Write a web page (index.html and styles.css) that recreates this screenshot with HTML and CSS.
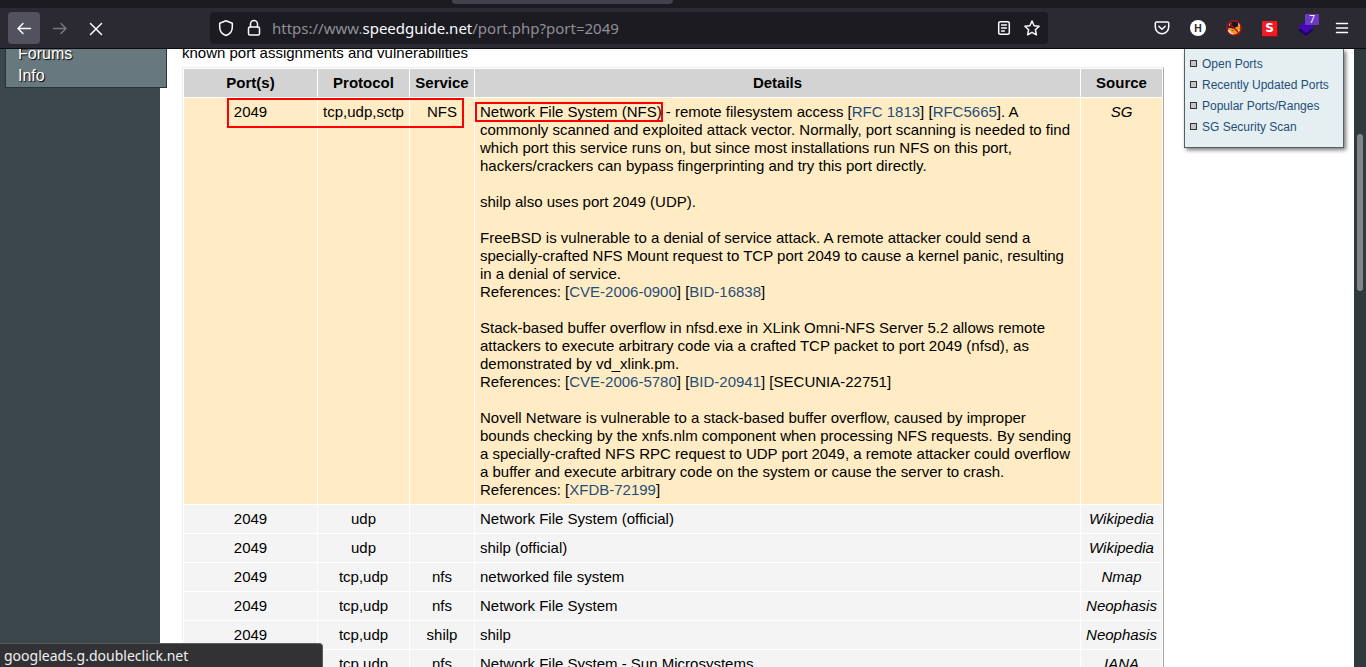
FILE: index.html
```html
<!DOCTYPE html>
<html lang="en">
<head>
<meta charset="utf-8">
<title>Port 2049 (tcp/udp)</title>
<link rel="stylesheet" href="styles.css">
</head>
<body>
<header class="chrome">
  <div class="tabstrip"><div class="tab"></div></div>
  <div class="toolbar">
    <div class="nav">
      <button class="nav-button nav-active" aria-label="Back"><svg width="16" height="16" viewBox="0 0 16 16"><path d="M14.500 8.500H2M7 3.500l-5 5 5 5"/></svg></button>
      <button class="nav-button nav-disabled" aria-label="Forward" disabled><svg width="16" height="16" viewBox="0 0 16 16"><path d="M1.500 8.500H14M9 3.500l5 5-5 5"/></svg></button>
      <button class="nav-button" aria-label="Stop"><svg width="16" height="16" viewBox="0 0 16 16"><path d="M2.500 3.500l11 11M13.500 3.500l-11 11"/></svg></button>
    </div>
    <div class="address">
      <svg width="16" height="18" viewBox="0 0 16 18"><path d="M8 1.800L14.300 4.300v3.900c0 4-2.800 7-6.300 8.300C4.500 15.200 1.700 12.200 1.700 8.200V4.300z"/></svg>
      <svg width="16" height="18" viewBox="0 0 16 18"><rect x="2.500" y="8" width="11" height="8" rx="1.500"/><path d="M4.500 8V5a3.500 3.500 0 0 1 7 0v3"/></svg>
      <div class="url">https://www.<span class="domain">speedguide.net</span>/port.php?port=2049</div>
      <svg width="16" height="16" viewBox="0 0 16 16"><rect x="2.700" y="1.700" width="10.600" height="12.600" rx="1.500"/><path d="M5.500 5h5M5.500 8h5M5.500 11h3" stroke-width="1.300"/></svg>
      <svg width="16" height="16" viewBox="0 0 16 16"><path d="M8 1l2.100 4.700 5 .6-3.700 3.500 1 5L8 12.300l-4.400 2.500 1-5L.9 6.300l5-.6z"/></svg>
    </div>
    <div class="extensions">
      <svg width="16" height="16" viewBox="0 0 16 16"><path d="M2.500 2h11a1.200 1.200 0 0 1 1.200 1.200V7a6.700 6.700 0 0 1-13.400 0V3.200A1.200 1.200 0 0 1 2.500 2zM4.800 6.300L8 9.300l3.200-3"/></svg>
      <span class="badge-h">H</span>
      <svg width="16" height="16" viewBox="0 0 16 16" class="fox"><path fill="#17161b" d="M4 3l4-1 4 1-1 4-5 1z"/><path fill="#ee951f" d="M2 8l3 0 3 1 2-2 2-.500 2-3 .500 6-3 4-4 1.500-4-2z"/><path fill="#eee" d="M2.500 3l3 .500-2 2.500zM12 2l2 3-1.500 1zM1.500 10l2 0 2 3 2 0-1 2-3-1zM12 11l2-1-1.500 3z"/><path fill="#7a4a12" d="M6 10h1v1H6zM10 9.500h1v1h-1z"/><circle cx="8" cy="8" r="7.300" fill="none" stroke="#c20a0d" stroke-width="1.200"/><path d="M3 3l10.500 10.500" stroke="#c20a0d" stroke-width="1.200"/></svg>
      <span class="badge-s">S</span>
      <span class="layers"><svg width="18" height="18" viewBox="0 0 18 18"><path fill="#24006b" d="M1 11l8-3 8 3-8 6z"/><path fill="#4507b1" d="M1 8l8-6 8 6-8 6z"/></svg><span class="count">7</span></span>
      <button class="menu-button" aria-label="Menu"><svg width="14" height="16" viewBox="0 0 14 16"><path d="M1.500 3.500h11M1.500 8h11M1.500 12.500h11"/></svg></button>
    </div>
  </div>
</header>
<div class="viewport">
  <aside class="sidebar">
    <nav class="menu"><a href="#">Forums</a><a href="#">Info</a></nav>
  </aside>
  <main class="content">
    <p class="intro">known port assignments and vulnerabilities</p>
    <table class="ports">
      <colgroup><col class="col-port"><col class="col-protocol"><col class="col-service"><col><col class="col-source"></colgroup>
      <thead><tr><th>Port(s)</th><th>Protocol</th><th>Service</th><th>Details</th><th>Source</th></tr></thead>
      <tbody>
        <tr class="featured"><td>2049</td><td>tcp,udp,sctp</td><td>NFS</td>
          <td>Network File System (NFS) - remote filesystem access [<a href="#">RFC 1813</a>] [<a href="#">RFC5665</a>]. A commonly scanned and exploited attack vector. Normally, port scanning is needed to find which port this service runs on, but since most installations run NFS on this port, hackers/crackers can bypass fingerprinting and try this port directly.<br><br>
          shilp also uses port 2049 (UDP).<br><br>
          FreeBSD is vulnerable to a denial of service attack. A remote attacker could send a specially-crafted NFS Mount request to TCP port 2049 to cause a kernel panic, resulting in a denial of service.<br>
          References: [<a href="#">CVE-2006-0900</a>] [<a href="#">BID-16838</a>]<br><br>
          Stack-based buffer overflow in nfsd.exe in XLink Omni-NFS Server 5.2 allows remote attackers to execute arbitrary code via a crafted TCP packet to port 2049 (nfsd), as demonstrated by vd_xlink.pm.<br>
          References: [<a href="#">CVE-2006-5780</a>] [<a href="#">BID-20941</a>] [SECUNIA-22751]<br><br>
          Novell Netware is vulnerable to a stack-based buffer overflow, caused by improper bounds checking by the xnfs.nlm component when processing NFS requests. By sending a specially-crafted NFS RPC request to UDP port 2049, a remote attacker could overflow a buffer and execute arbitrary code on the system or cause the server to crash.<br>
          References: [<a href="#">XFDB-72199</a>]</td><td>SG</td></tr>
        <tr><td>2049</td><td>udp</td><td></td><td>Network File System (official)</td><td>Wikipedia</td></tr>
        <tr><td>2049</td><td>udp</td><td></td><td>shilp (official)</td><td>Wikipedia</td></tr>
        <tr><td>2049</td><td>tcp,udp</td><td>nfs</td><td>networked file system</td><td>Nmap</td></tr>
        <tr><td>2049</td><td>tcp,udp</td><td>nfs</td><td>Network File System</td><td>Neophasis</td></tr>
        <tr><td>2049</td><td>tcp,udp</td><td>shilp</td><td>shilp</td><td>Neophasis</td></tr>
        <tr><td>2049</td><td>tcp,udp</td><td>nfs</td><td>Network File System - Sun Microsystems</td><td>IANA</td></tr>
      </tbody>
    </table>
    <div class="mark mark-row"></div>
    <div class="mark mark-name"></div>
  </main>
  <aside class="related">
    <ul class="panel">
      <li><a href="#">Open Ports</a></li>
      <li><a href="#">Recently Updated Ports</a></li>
      <li><a href="#">Popular Ports/Ranges</a></li>
      <li><a href="#">SG Security Scan</a></li>
    </ul>
  </aside>
  <div class="scrollbar"><div class="thumb"></div></div>
</div>
<div class="status">googleads.g.doubleclick.net</div>
</body>
</html>
```
FILE: styles.css
```css
*, *::before { box-sizing: border-box; }

body {
  margin: 0;
  height: 100vh;
  display: flex;
  flex-direction: column;
  overflow: hidden;
  font: 15px/18px "Liberation Sans", Arial, sans-serif;
  color: #000;
  background: #fff;
}

a { color: #1f4e79; text-decoration: none; }
button { border: 0; padding: 0; background: none; color: inherit; }
svg { display: block; flex: none; }

.chrome {
  flex: none;
  background: #2b2a33;
  border-bottom: 1px solid #0c0c0d;
  color: #fbfbfe;
  position: relative;
  z-index: 2;
}
.chrome svg { fill: none; stroke: currentColor; stroke-width: 1.5; stroke-linecap: round; stroke-linejoin: round; }
.chrome .fox, .chrome .layers svg { stroke: none; }

.tabstrip { height: 8px; background: #1c1b22; }
.tab { width: 221px; height: 4px; margin-left: 452px; background: #42414d; border-radius: 0 0 4px 4px; }

.toolbar { display: flex; align-items: center; height: 40px; padding: 0 17px 0 8px; }
.nav { display: flex; gap: 4px; width: 202px; }
.nav-button { display: flex; align-items: center; justify-content: center; width: 32px; height: 32px; border-radius: 4px; }
.nav-active { background: #52525e; }
.nav-disabled { color: #77767e; }

.address {
  flex: 1;
  display: flex;
  align-items: center;
  gap: 12px;
  height: 32px;
  padding: 0 8px;
  border-radius: 4px;
  background: #1c1b22;
}
.url { flex: 1; margin-left: -2px; font: 15px/20px "Noto Sans", sans-serif; color: #8f8f96; white-space: nowrap; }
.domain { color: #fbfbfe; }

.extensions { display: flex; align-items: center; gap: 20px; margin-left: 106px; }
.badge-h { width: 16px; height: 16px; border-radius: 8px; background: #fff; color: #2b2a33; font: bold 10px/16px Inter, sans-serif; text-align: center; }
.badge-s { width: 15px; height: 15px; background: #ed1c24; box-shadow: 1px 1px #8b0b10; font: bold 12px/15px "DejaVu Sans", sans-serif; text-align: center; }
.layers { position: relative; }
.count { position: absolute; top: -5px; right: -4px; width: 14px; height: 11px; border-radius: 1px; background: #6b3ac2; font: 10px/11px "Noto Sans", sans-serif; text-align: center; }

.viewport { flex: 1; min-height: 0; display: flex; overflow: hidden; }

.sidebar { flex: none; width: 160px; background: #3b474c; }
.menu {
  position: relative;
  width: 162px;
  margin: -6px 0 0 5px;
  border: 1px solid #2a3438;
  border-top: 0;
  background: #68787f;
}
.menu a { display: block; padding-left: 12px; font-size: 16px; line-height: 22px; color: #fff; text-shadow: 1px 1px 1px #000; }

.content { position: relative; flex: 1; min-width: 0; padding-left: 22px; }
.intro { margin: -5px 0 5px; }

.ports { width: 100%; table-layout: fixed; border: 1px solid; border-color: #eee #a8a8a8 #a8a8a8 #eee; border-spacing: 1px; }
.col-port { width: 133px; }
.col-protocol { width: 91px; }
.col-service { width: 64px; }
.col-source { width: 81px; }
.ports th, .ports td { padding: 5px; vertical-align: top; text-align: center; background: #f4f4f4; }
.ports th { padding: 5px 0; background: #d3d3d3; }
.ports td:nth-child(4) { text-align: left; }
.ports td:nth-child(5) { padding: 5px 0; font-style: italic; }
.ports .featured td { background: #ffecc4; }

.mark { position: absolute; border: 2px solid #f00; }
.mark-row { left: 67px; top: 49px; width: 237px; height: 30px; }
.mark-name { left: 315px; top: 53px; width: 188px; height: 20px; }

.related { flex: none; width: 190px; padding: 0 10px 0 20px; }
.panel {
  margin: 0;
  padding: 5px 5px 9px;
  list-style: none;
  border: 1px solid #535f65;
  border-top: 0;
  background: #e5eef1;
  box-shadow: 2px 2px 4px #777;
  font-size: 12px;
  line-height: 21px;
}
.panel li { display: flex; gap: 5px; white-space: nowrap; }
.panel li::before { content: ""; flex: none; width: 7px; height: 7px; margin-top: 6px; border: 1px solid #333; background: #c5c5c5; }

.scrollbar { flex: none; width: 12px; padding: 85px 3px 0; background: #2f393e; }
.thumb { height: 157px; border-radius: 3px; background: #818589; }

.status {
  position: absolute;
  left: 0;
  bottom: 0;
  z-index: 3;
  width: 323px;
  height: 24px;
  padding-left: 4px;
  border: solid #5b5b60;
  border-width: 1px 1px 0 0;
  border-radius: 0 4px 0 0;
  background: #323234;
  color: #f0f0f2;
  font: 14px/24px "Noto Sans", sans-serif;
}
```
